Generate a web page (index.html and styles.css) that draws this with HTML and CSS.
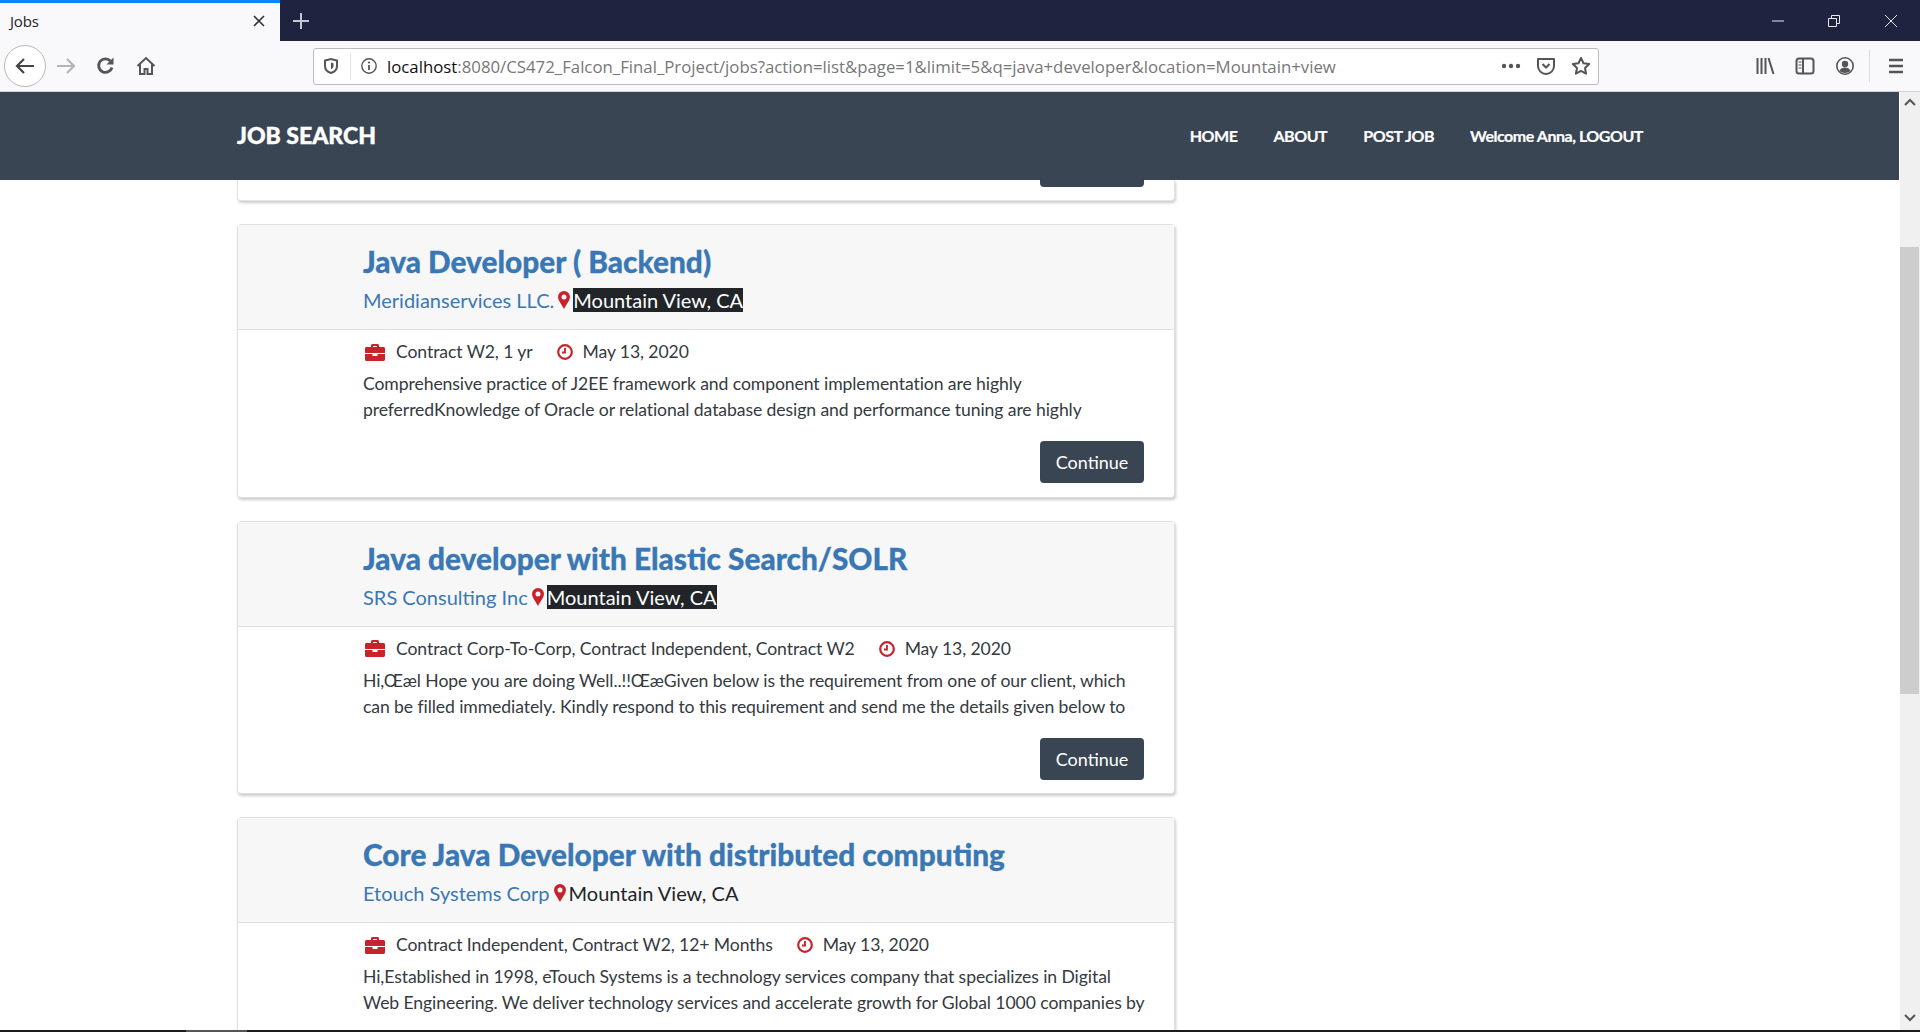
FILE: index.html
```html
<!DOCTYPE html>
<html lang="en">
<head>
<meta charset="utf-8">
<title>Jobs</title>
<link rel="stylesheet" href="styles.css">
</head>
<body>
<div class="window">
  <div class="tabbar">
    <div class="tab">
      <span class="tab-title">Jobs</span>
      <svg class="tab-close" width="14" height="14" viewBox="0 0 14 14"><path d="M2 2l10 10M12 2L2 12" stroke="#333" stroke-width="1.6" fill="none"/></svg>
    </div>
    <svg class="new-tab" width="20" height="20" viewBox="0 0 20 20"><path d="M10 2v16M2 10h16" stroke="#c4c6d2" stroke-width="2" fill="none"/></svg>
    <div class="win-controls">
      <span class="win-btn"><svg width="14" height="14" viewBox="0 0 14 14"><path d="M1 7h12" stroke="#e8e9ee" fill="none"/></svg></span>
      <span class="win-btn"><svg width="14" height="14" viewBox="0 0 14 14"><path d="M1.500 4.500h8v8h-8zM4.500 4.500v-3h8v8h-3" stroke="#e8e9ee" fill="none"/></svg></span>
      <span class="win-btn"><svg width="14" height="14" viewBox="0 0 14 14"><path d="M1 1l12 12M13 1L1 13" stroke="#e8e9ee" fill="none"/></svg></span>
    </div>
  </div>
  <div class="toolbar">
    <span class="back-btn"><svg width="22" height="20" viewBox="0 0 22 20"><path d="M20 10H3M10 3l-7 7 7 7" stroke="#444" stroke-width="2.200" fill="none"/></svg></span>
    <span class="tool-btn"><svg width="22" height="20" viewBox="0 0 22 20"><path d="M2 10h17M12 3l7 7-7 7" stroke="#b4b4b6" stroke-width="2.200" fill="none"/></svg></span>
    <span class="tool-btn reload"><svg width="20" height="20" viewBox="0 0 20 20"><path d="M16 11.500A6.800 6.800 0 1 1 14.500 5" stroke="#555" stroke-width="2.800" fill="none"/><path d="M17.500 1.500v7h-7z" fill="#555"/></svg></span>
    <span class="tool-btn"><svg width="20" height="20" viewBox="0 0 20 20"><path d="M1.500 10L10 2l8.500 8M4 8.500V18h4.500v-5h3v5H16V8.500" stroke="#555" stroke-width="2" fill="none"/></svg></span>
    <div class="urlbar">
      <svg class="url-shield" width="18" height="18" viewBox="0 0 18 18"><path d="M3 3.500L9 2l6 1.500V9c0 3.500-2.500 6-6 7-3.500-1-6-3.500-6-7z" stroke="#555" stroke-width="2" fill="none"/><path d="M9 5.500l2.500.7V9c0 1.500-1 2.700-2.500 3.300z" fill="#555"/></svg>
      <span class="url-sep"></span>
      <svg class="url-info" width="18" height="18" viewBox="0 0 18 18"><circle cx="9" cy="9" r="7.200" stroke="#555" stroke-width="1.400" fill="none"/><path d="M9 8v5" stroke="#555" stroke-width="1.800"/><circle cx="9" cy="5.500" r="1.100" fill="#555"/></svg>
      <span class="url-text"><span class="url-host">localhost</span>:8080/CS472_Falcon_Final_Project/jobs?action=list&amp;page=1&amp;limit=5&amp;q=java+developer&amp;location=Mountain+view</span>
      <span class="url-actions">
        <svg width="20" height="6" viewBox="0 0 20 6"><circle cx="3" cy="3" r="2.200" fill="#555"/><circle cx="10" cy="3" r="2.200" fill="#555"/><circle cx="17" cy="3" r="2.200" fill="#555"/></svg>
        <svg width="20" height="20" viewBox="0 0 20 20"><path d="M2 3h16v7a8 8 0 0 1-16 0z" stroke="#555" stroke-width="2" stroke-linejoin="round" fill="none"/><path d="M6.500 8l3.500 3.500L13.500 8" stroke="#555" stroke-width="2" fill="none"/></svg>
        <svg width="20" height="20" viewBox="0 0 20 20"><path d="M10 2l2.500 5.300 5.700.7-4.200 4 1.100 5.700-5.100-2.800-5.100 2.800L6 12 1.800 8l5.700-.7z" stroke="#555" stroke-width="2" stroke-linejoin="round" fill="none"/></svg>
      </span>
    </div>
    <div class="tool-right">
      <span class="tool-btn"><svg width="20" height="20" viewBox="0 0 20 20"><path d="M2.500 2v16M6.500 2v16M10.500 2v16M13.500 2l5 16" stroke="#555" stroke-width="2" fill="none"/></svg></span>
      <span class="tool-btn"><svg width="20" height="20" viewBox="0 0 20 20"><rect x="1.500" y="2.500" width="17" height="15" rx="2.500" stroke="#555" stroke-width="2" fill="none"/><path d="M8 3v14" stroke="#555" stroke-width="2"/><path d="M3.500 6h3M3.500 9h3M3.500 12h3" stroke="#555" stroke-width="1.200"/></svg></span>
      <span class="tool-btn"><svg width="20" height="20" viewBox="0 0 20 20"><circle cx="10" cy="10" r="8.200" stroke="#555" stroke-width="1.600" fill="none"/><circle cx="10" cy="8" r="3.200" fill="#555"/><path d="M4.500 15c1-3 3-3.500 5.500-3.500s4.500.5 5.500 3.500c-3 2.500-8 2.500-11 0z" fill="#555"/></svg></span>
      <span class="tool-divider"></span>
      <span class="tool-btn"><svg width="18" height="18" viewBox="0 0 18 18"><path d="M2 3h14M2 9h14M2 15h14" stroke="#555" stroke-width="2.600" fill="none"/></svg></span>
    </div>
  </div>
  <div class="viewport">
    <div class="page">
      <header class="site-header">
        <a class="brand">JOB SEARCH</a>
        <nav class="nav">
          <a>HOME</a>
          <a>ABOUT</a>
          <a>POST JOB</a>
          <a>Welcome Anna, LOGOUT</a>
        </nav>
      </header>
      <main class="jobs">
        <div class="card-stub"><span class="btn-stub"></span></div>

        <article class="card">
          <div class="card-head">
            <h2 class="job-title">Java Developer ( Backend)</h2>
            <p class="job-sub"><a class="company">Meridianservices LLC.</a>
              <svg class="pin" width="12" height="18" viewBox="0 0 12 18"><path fill-rule="evenodd" d="M6 0a6 6 0 0 1 6 6c0 3.500-4 8-6 12C4 14 0 9.500 0 6a6 6 0 0 1 6-6zm0 3.500a2.500 2.500 0 1 0 0 5 2.500 2.500 0 0 0 0-5z" fill="#c8232c"/></svg>
              <span class="loc selected">Mountain View, CA</span></p>
          </div>
          <div class="card-body">
            <div class="meta">
              <svg class="case" width="20" height="17" viewBox="0 0 20 17"><path fill-rule="evenodd" d="M6 3V1.500C6 .7 6.700 0 7.500 0h5c.8 0 1.500.7 1.500 1.500V3h4.500c.8 0 1.500.7 1.500 1.500V9H0V4.500C0 3.700.7 3 1.500 3zm2-1v1h4V2zM0 10h7.500v2h5v-2H20v5.500c0 .8-.7 1.500-1.500 1.500h-17C.7 17 0 16.300 0 15.500z" fill="#c8232c"/></svg>
              <span>Contract W2, 1 yr</span>
              <svg class="clock" width="16" height="16" viewBox="0 0 16 16"><circle cx="8" cy="8" r="6.800" stroke="#c8232c" stroke-width="2.200" fill="none"/><path d="M8 4v4.500H5" stroke="#c8232c" stroke-width="1.800" fill="none"/></svg>
              <span>May 13, 2020</span>
            </div>
            <p class="desc">Comprehensive practice of J2EE framework and component implementation are highly preferredKnowledge of Oracle or relational database design and performance tuning are highly</p>
            <div class="actions"><a class="btn">Continue</a></div>
          </div>
        </article>

        <article class="card">
          <div class="card-head">
            <h2 class="job-title">Java developer with Elastic Search/SOLR</h2>
            <p class="job-sub"><a class="company">SRS Consulting Inc</a>
              <svg class="pin" width="12" height="18" viewBox="0 0 12 18"><path fill-rule="evenodd" d="M6 0a6 6 0 0 1 6 6c0 3.500-4 8-6 12C4 14 0 9.500 0 6a6 6 0 0 1 6-6zm0 3.500a2.500 2.500 0 1 0 0 5 2.500 2.500 0 0 0 0-5z" fill="#c8232c"/></svg>
              <span class="loc selected">Mountain View, CA</span></p>
          </div>
          <div class="card-body">
            <div class="meta">
              <svg class="case" width="20" height="17" viewBox="0 0 20 17"><path fill-rule="evenodd" d="M6 3V1.500C6 .7 6.700 0 7.500 0h5c.8 0 1.500.7 1.500 1.500V3h4.500c.8 0 1.500.7 1.500 1.500V9H0V4.500C0 3.700.7 3 1.500 3zm2-1v1h4V2zM0 10h7.500v2h5v-2H20v5.500c0 .8-.7 1.500-1.500 1.500h-17C.7 17 0 16.300 0 15.500z" fill="#c8232c"/></svg>
              <span>Contract Corp-To-Corp, Contract Independent, Contract W2</span>
              <svg class="clock" width="16" height="16" viewBox="0 0 16 16"><circle cx="8" cy="8" r="6.800" stroke="#c8232c" stroke-width="2.200" fill="none"/><path d="M8 4v4.500H5" stroke="#c8232c" stroke-width="1.800" fill="none"/></svg>
              <span>May 13, 2020</span>
            </div>
            <p class="desc">Hi,Œæl Hope you are doing Well..!!ŒæGiven below is the requirement from one of our client, which can be filled immediately. Kindly respond to this requirement and send me the details given below to</p>
            <div class="actions"><a class="btn">Continue</a></div>
          </div>
        </article>

        <article class="card">
          <div class="card-head">
            <h2 class="job-title">Core Java Developer with distributed computing</h2>
            <p class="job-sub"><a class="company">Etouch Systems Corp</a>
              <svg class="pin" width="12" height="18" viewBox="0 0 12 18"><path fill-rule="evenodd" d="M6 0a6 6 0 0 1 6 6c0 3.500-4 8-6 12C4 14 0 9.500 0 6a6 6 0 0 1 6-6zm0 3.500a2.500 2.500 0 1 0 0 5 2.500 2.500 0 0 0 0-5z" fill="#c8232c"/></svg>
              <span class="loc">Mountain View, CA</span></p>
          </div>
          <div class="card-body">
            <div class="meta">
              <svg class="case" width="20" height="17" viewBox="0 0 20 17"><path fill-rule="evenodd" d="M6 3V1.500C6 .7 6.700 0 7.500 0h5c.8 0 1.500.7 1.500 1.500V3h4.500c.8 0 1.500.7 1.500 1.500V9H0V4.500C0 3.700.7 3 1.500 3zm2-1v1h4V2zM0 10h7.500v2h5v-2H20v5.500c0 .8-.7 1.500-1.500 1.500h-17C.7 17 0 16.300 0 15.500z" fill="#c8232c"/></svg>
              <span>Contract Independent, Contract W2, 12+ Months</span>
              <svg class="clock" width="16" height="16" viewBox="0 0 16 16"><circle cx="8" cy="8" r="6.800" stroke="#c8232c" stroke-width="2.200" fill="none"/><path d="M8 4v4.500H5" stroke="#c8232c" stroke-width="1.800" fill="none"/></svg>
              <span>May 13, 2020</span>
            </div>
            <p class="desc">Hi,Established in 1998, eTouch Systems is a technology services company that specializes in Digital Web Engineering. We deliver technology services and accelerate growth for Global 1000 companies by</p>
          </div>
        </article>
      </main>
    </div>
    <div class="scrollbar">
      <svg class="sb-arrow" width="14" height="10" viewBox="0 0 14 10"><path d="M2 7l5-5 5 5" stroke="#555" stroke-width="2" fill="none"/></svg>
      <span class="sb-thumb"></span>
      <svg class="sb-arrow sb-down" width="14" height="10" viewBox="0 0 14 10"><path d="M2 3l5 5 5-5" stroke="#555" stroke-width="2" fill="none"/></svg>
    </div>
  </div>
  <div class="taskbar"><span class="task-item"></span></div>
</div>
</body>
</html>
```

FILE: styles.css
```css
* { box-sizing: border-box; }
html, body { margin: 0; height: 100%; overflow: hidden; background: #fff; }
body { font-family: "Lato", "Liberation Sans", sans-serif; color: #343a40; }
svg { display: block; flex: none; }

.window { display: flex; flex-direction: column; height: 1032px; overflow: hidden; }

/* browser chrome */
.tabbar { display: flex; align-items: stretch; height: 41px; background: #20233f; flex: none; }
.tab { display: flex; align-items: center; justify-content: space-between; width: 280px; padding: 0 14px 2px 10px; background: #f9f9fb; border-top: 3px solid #0a84ff; }
.tab-title { font: 15px "Open Sans", sans-serif; letter-spacing: -.2px; color: #222; }
.new-tab { align-self: center; margin-left: 11px; }
.win-controls { display: flex; margin-left: auto; }
.win-btn { display: flex; align-items: center; justify-content: center; width: 56px; }
.win-btn:last-child { width: 58px; }

.toolbar { display: flex; align-items: center; height: 51px; padding: 0 4px; background: #f9f9fb; border-bottom: 1px solid #d4d4d6; flex: none; }
.back-btn { display: flex; align-items: center; justify-content: center; width: 42px; height: 42px; border: 1px solid #b8b8ba; border-radius: 50%; background: #fff; }
.tool-btn { display: flex; align-items: center; justify-content: center; width: 40px; height: 32px; }
.urlbar { display: flex; align-items: center; width: 1286px; height: 37px; margin-left: 147px; padding: 0 7px 0 8px; background: #fff; border: 1px solid #bcbcbe; border-radius: 3px; }
.url-sep { width: 1px; height: 26px; margin: 0 9px 0 10px; background: #e4e4e6; }
.url-info { margin-right: 9px; }
.url-text { font: 16.800px/22px "Open Sans", sans-serif; color: #777; white-space: nowrap; flex: 1; overflow: hidden; padding-top: 2px; }
.url-host { color: #111; }
.url-actions { display: flex; align-items: center; gap: 15px; }
.tool-right { display: flex; align-items: center; margin-left: auto; }
.tool-divider { width: 1px; height: 32px; margin: 0 6px 0 4px; background: #dcdcde; }

/* page */
.viewport { display: flex; flex: 1; min-height: 0; }
.page { flex: 1; min-width: 0; overflow: hidden; padding-right: 1px; }
.site-header { display: flex; align-items: center; justify-content: space-between; height: 88px; padding: 0 256px 2px 237px; background: #3a4553; color: #fff; }
.brand { font-size: 23px; font-weight: 900; -webkit-text-stroke: .4px #fff; }
.nav { display: flex; gap: 36px; font-size: 16px; font-weight: 700; letter-spacing: -.46px; -webkit-text-stroke: .2px #fff; }

.jobs { display: flex; flex-direction: column; gap: 23px; width: 938px; margin-left: 237px; }
.card-stub { height: 21px; padding-left: 802px; background: #fff; border: 1px solid #e4e4e4; border-top: 0; border-radius: 0 0 4px 4px; box-shadow: 1px 2px 3px rgba(0,0,0,.2); flex: none; }
.btn-stub { display: block; width: 104px; height: 7px; background: #3a4553; border-radius: 0 0 4px 4px; }
.card { background: #fff; border: 1px solid #e0e0e0; border-radius: 4px; box-shadow: 1px 2px 3px rgba(0,0,0,.2); height: 273.500px; flex: none; }
.card-head { height: 105px; padding: 19px 20px 0 125px; background: #f7f7f7; border-bottom: 1px solid #dfdfdf; }
.job-title { margin: 0; font-size: 29.800px; line-height: 36px; font-weight: 900; color: #3a78b5; -webkit-text-stroke: .3px #3a78b5; }
.job-sub { display: flex; align-items: center; margin: 7px 0 0; font-size: 20px; line-height: 26px; }
.company { color: #3a78b5; margin-right: 4px; }
.pin { margin-right: 3px; }
.loc { color: #212529; }
.selected { background: #212529; color: #fff; line-height: 24px; }
.card-body { padding: 9px 27px 0 125px; }
.meta { display: flex; align-items: center; font-size: 17.600px; line-height: 26px; letter-spacing: -.1px; }
.case { margin: 0 11px 0 2px; }
.clock { margin: 0 10px 0 24px; }
.desc { margin: 6px 0 0; font-size: 17.600px; line-height: 26px; letter-spacing: -.09px; color: #343a40; }
.actions { display: flex; justify-content: flex-end; margin-top: 18px; padding-right: 3px; }
.btn { display: block; width: 104px; height: 42px; background: #3a4553; border-radius: 4px; color: #fff; font-size: 18px; line-height: 42px; text-align: center; }

/* scrollbar */
.scrollbar { position: relative; display: flex; flex-direction: column; justify-content: space-between; align-items: center; width: 20px; flex: none; padding: 6px 0 8px; background: #f0f0f0; }
.sb-thumb { position: absolute; top: 155px; left: 0; width: 19px; height: 447px; background: #cdcdcd; }
.taskbar { position: relative; height: 2px; background: #1c1c1c; flex: none; }
.task-item { position: absolute; left: 186px; top: 0; width: 61px; height: 2px; background: #555; }
```
